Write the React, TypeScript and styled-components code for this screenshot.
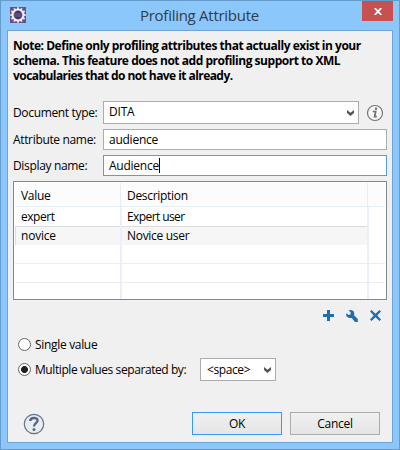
import React from "react";
import styled, { createGlobalStyle } from "styled-components";

const GlobalStyle = createGlobalStyle`
  * { box-sizing: border-box; }
  body { margin: 0; background: #8cc7fb; }
`;

const Dialog = styled.div`
  width: 400px;
  height: 450px;
  padding: 0 6px 7px 6px;
  border: 1px solid #659bcb;
  background: #8cc7fb;
  color: #000;
  font: 12px/16px "Open Sans", "Noto Sans", sans-serif;
  white-space: nowrap;
  overflow: hidden;
`;

const TitleBar = styled.header`
  height: 29px;
  display: flex;
  align-items: flex-start;
  padding-left: 3px;
`;

const AppIcon = styled.svg`
  width: 16px;
  height: 16px;
  margin-top: 6px;
`;

const Title = styled.h1`
  flex: 1;
  margin: 4px 0 0 114px;
  font-size: 15px;
  line-height: 20px;
  font-weight: 400;
  color: #303c48;
  letter-spacing: -0.27px;
`;

const CloseButton = styled.button`
  width: 31px;
  height: 20px;
  padding: 0;
  border: 0;
  background: #c75050;
  display: flex;
  align-items: center;
  justify-content: center;
`;

const Client = styled.main`
  width: 386px;
  height: 413px;
  padding: 7px 5px 0;
  border: 1px solid #6fa5d6;
  background: #f0f0f0;
`;

const Note = styled.p`
  margin: 0 0 18px;
  height: 45px;
  font-weight: 700;
  line-height: 15px;
`;

const Line = styled.span<{ $ls: number }>`
  display: block;
  letter-spacing: ${(p) => p.$ls}px;
`;

const Text = styled.span<{ $ls: number; $lift?: number }>`
  letter-spacing: ${(p) => p.$ls}px;
  padding-bottom: ${(p) => p.$lift ?? 0}px;
`;

const Field = styled.div`
  display: flex;
  align-items: center;
  margin-bottom: 5px;
`;

const Label = styled.label`
  width: 90px;
  letter-spacing: -0.34px;
`;

const Select = styled.div<{ $width: number; $inset: number }>`
  width: ${(p) => p.$width}px;
  height: 23px;
  display: flex;
  align-items: center;
  justify-content: space-between;
  padding: 0 4px 0 ${(p) => p.$inset}px;
  border: 1px solid #acacac;
  background: #fff;
`;

const Input = styled.div<{ $focused?: boolean }>`
  width: 284px;
  height: 21px;
  display: flex;
  align-items: center;
  padding-left: 5px;
  border: 1px solid ${(p) => (p.$focused ? "#569de5" : "#abadb3")};
  background: #fff;
`;

const Caret = styled.i`
  width: 1px;
  height: 15px;
  background: #000;
`;

const InfoIcon = styled.svg`
  width: 18px;
  height: 18px;
  margin-left: 7px;
`;

const Table = styled.div`
  width: 374px;
  height: 119px;
  padding: 1px;
  border: 1px solid #828790;
  background: #fff;
`;

const Row = styled.div<{ $last?: boolean }>`
  display: grid;
  grid-template-columns: 107px 247px 1fr;
  height: ${(p) => (p.$last ? 16 : 19)}px;
  border-bottom: ${(p) => (p.$last ? 0 : 1)}px solid #ededed;
`;

const HeaderRow = styled(Row)`
  height: 24px;
  grid-template-columns: 106px 247px 1fr;
  border-bottom-color: #e5effb;
  background: #fcfcfc;
`;

const HeaderCell = styled.div`
  padding-left: 6px;
  line-height: 25px;
  border-right: 1px solid #e4eefb;
  letter-spacing: -0.3px;
  &:last-child { border-right: 0; }
`;

const Cell = styled.div<{ $selected?: boolean; $first?: boolean; $ls?: number }>`
  padding-left: ${(p) => (p.$first ? 6 : 5)}px;
  line-height: 20px;
  border-right: 2px solid #eaf0fa;
  letter-spacing: ${(p) => p.$ls ?? -0.3}px;
  background: ${(p) => (p.$selected ? "#f6f6f6" : "#fff")};
  box-shadow: ${(p) => (p.$selected ? `inset ${p.$first ? "1px" : "0"} 1px #dcdcdc` : "none")};
  &:last-child { border-right: 0; }
`;

const Tools = styled.div`
  display: flex;
  justify-content: flex-end;
  gap: 12px;
  padding: 10px 5px 0 0;
  height: 38px;
`;

const ToolIcon = styled.svg`
  width: 12px;
  height: 12px;
  fill: #1f6eb0;
`;

const Option = styled.label<{ $height: number }>`
  display: flex;
  align-items: center;
  height: ${(p) => p.$height}px;
  padding-left: 5px;
`;

const Radio = styled.span<{ $checked?: boolean }>`
  width: 13px;
  height: 13px;
  margin-right: 4px;
  border: 1px solid #666;
  border-radius: 50%;
  background: ${(p) => (p.$checked ? "radial-gradient(circle, #202020 3.1px, #fff 3.8px)" : "#fff")};
`;

const OptionText = styled.span<{ $ls: number }>`
  width: 165px;
  letter-spacing: ${(p) => p.$ls}px;
`;

const Footer = styled.footer`
  display: flex;
  align-items: center;
  margin-top: 24px;
  padding-left: 10px;
`;

const HelpIcon = styled.svg`
  width: 22px;
  height: 22px;
  margin-right: 147px;
`;

const Button = styled.button<{ $primary?: boolean }>`
  width: 90px;
  height: 23px;
  margin-left: ${(p) => (p.$primary ? 0 : 8)}px;
  padding: 0;
  border: 1px solid ${(p) => (p.$primary ? "#3399ff" : "#acacac")};
  background: linear-gradient(#f0f0f0, #e5e5e5);
  color: #000;
  font: inherit;
  letter-spacing: -0.25px;
`;

const Chevron = () => (
  <svg width="7" height="6" viewBox="0 0 7 6">
    <path d="M0 0l3.5 2.7L7 0v3L3.5 6 0 3z" fill="#555" />
  </svg>
);

const teeth = Array.from({ length: 12 }, (_, i) => i * 30);

export default function App() {
  return (
    <>
      <GlobalStyle />
      <Dialog>
        <TitleBar>
          <AppIcon viewBox="0 0 16 16">
            <rect width="16" height="16" fill="#66518e" />
            <circle cx="8" cy="8" r="5.4" fill="#43346b" stroke="#f1eeee" strokeWidth="2" />
            {teeth.map((a) => (
              <rect key={a} x="7.1" y="0.3" width="1.8" height="2" fill="#eeebe9" transform={`rotate(${a} 8 8)`} />
            ))}
            <path d="M4 7h8M4 9h8" stroke="#76699a" strokeWidth="1" />
          </AppIcon>
          <Title>Profiling Attribute</Title>
          <CloseButton aria-label="Close">
            <svg width="8" height="7" viewBox="0 0 8 7">
              <path d="M.7 0l6.6 7M7.3 0L.7 7" stroke="#fff" strokeWidth="1.8" />
            </svg>
          </CloseButton>
        </TitleBar>
        <Client>
          <Note>
            <Line $ls={-0.47}>Note: Define only profiling attributes that actually exist in your</Line>
            <Line $ls={-0.47}>schema. This feature does not add profiling support to XML</Line>
            <Line $ls={-0.56}>vocabularies that do not have it already.</Line>
          </Note>
          <Field>
            <Label>Document type:</Label>
            <Select $width={256} $inset={5}>
              <Text $ls={-0.2} $lift={2}>DITA</Text>
              <Chevron />
            </Select>
            <InfoIcon viewBox="0 0 18 18">
              <circle cx="9" cy="9" r="7.5" fill="#f7f7f7" stroke="#747474" strokeWidth="1.2" />
              <path d="M6.8 7.5h2.9L8.6 12.7h2.2" fill="none" stroke="#707070" strokeWidth="1.7" />
              <circle cx="10" cy="4.8" r="1.2" fill="#707070" />
            </InfoIcon>
          </Field>
          <Field>
            <Label>Attribute name:</Label>
            <Input><Text $ls={-0.25}>audience</Text></Input>
          </Field>
          <Field>
            <Label>Display name:</Label>
            <Input $focused><Text $ls={-0.25}>Audience</Text><Caret /></Input>
          </Field>
          <Table>
            <HeaderRow>
              <HeaderCell>Value</HeaderCell>
              <HeaderCell>Description</HeaderCell>
              <HeaderCell />
            </HeaderRow>
            <Row>
              <Cell $first $ls={-0.45}>expert</Cell>
              <Cell $ls={-0.6}>Expert user</Cell>
              <Cell />
            </Row>
            <Row>
              <Cell $first $selected $ls={-0.2}>novice</Cell>
              <Cell $selected>Novice user</Cell>
              <Cell />
            </Row>
            <Row><Cell $first /><Cell /><Cell /></Row>
            <Row><Cell $first /><Cell /><Cell /></Row>
            <Row $last><Cell $first /><Cell /><Cell /></Row>
          </Table>
          <Tools>
            <ToolIcon viewBox="0 0 12 12"><path d="M5 0h3v4h4v3H8v4H5V7H1V4h4z" /></ToolIcon>
            <ToolIcon viewBox="0 0 12 12"><path d="M2.5 .5L5 0 7.5 1 8.3 3.5 8 5.2 11.8 9v3H9L5.8 8 3 8 .6 6.5 0 4 .8 3.6 2.5 5 4.7 4.2 4.6 2.2z" /></ToolIcon>
            <ToolIcon viewBox="0 0 12 12"><path d="M0 1.5L1.5 0 5.5 3.7 9.5 0 11 1.5 7.3 5.5 11 9.5 9.5 11 5.5 7.3 1.5 11 0 9.5 3.7 5.5z" /></ToolIcon>
          </Tools>
          <Option $height={13}><Radio /><OptionText $ls={-0.32}>Single value</OptionText></Option>
          <Option $height={37}>
            <Radio $checked />
            <OptionText $ls={-0.42}>Multiple values separated by:</OptionText>
            <Select $width={76} $inset={6}><Text $ls={-0.4}>&lt;space&gt;</Text><Chevron /></Select>
          </Option>
          <Footer>
            <HelpIcon viewBox="0 0 22 22">
              <circle cx="11" cy="11" r="9.7" fill="#e9ecf0" stroke="#62738c" strokeWidth="1.2" />
              <path d="M7.2 8C7.2 4 14.6 4 14.6 7.6c0 2.6-3.6 2.6-3.6 5.8" fill="none" stroke="#52688a" strokeWidth="2.4" />
              <circle cx="11" cy="16.6" r="1.5" fill="#52688a" />
            </HelpIcon>
            <Button $primary>OK</Button>
            <Button>Cancel</Button>
          </Footer>
        </Client>
      </Dialog>
    </>
  );
}
